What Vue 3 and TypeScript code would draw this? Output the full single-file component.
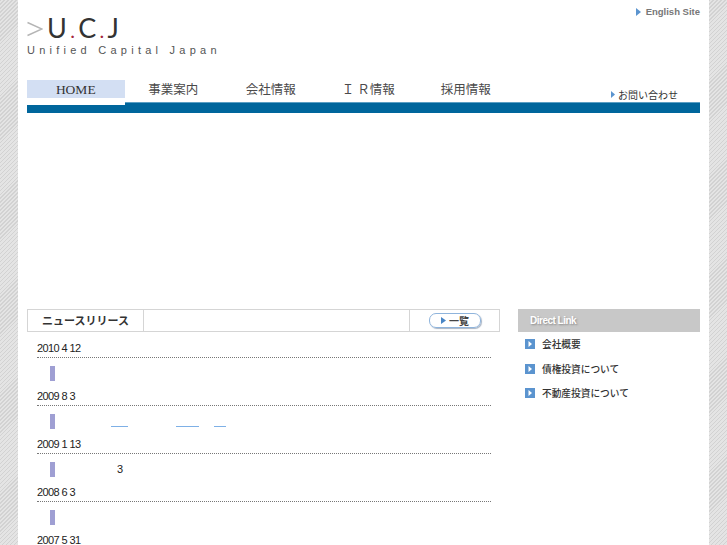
<script setup lang="ts">
const nav = ['HOME', '事業案内', '会社情報', 'Ｉ Ｒ情報', '採用情報']
const links = ['会社概要', '債権投資について', '不動産投資について']
const news: { date: string; gaps?: number[]; num?: string }[] = [
  { date: '2010 4 12' },
  { date: '2009 8 3', gaps: [17, 23, 12] },
  { date: '2009 1 13', num: '3' },
  { date: '2008 6 3' },
  { date: '2007 5 31' },
]
</script>

<template>
  <div class="page">
    <header class="head">
      <div class="logo">
        <div class="mark">
          <svg class="gt" width="16" height="16" viewBox="0 0 16 16"><path d="M0.500 1.500L15 8 0.500 14.500" fill="none" stroke="#b5b5b5" stroke-width="1.400" /></svg>
          <span>U<i>.</i>C<i>.</i><b>J</b></span>
        </div>
        <div class="sub">Unified Capital Japan</div>
      </div>
      <a class="english"><svg width="5" height="8" viewBox="0 0 5 8"><path d="M0 0l5 4-5 4z" fill="#5b94cf" /></svg>English Site</a>
    </header>
    <nav class="nav">
      <a v-for="(item, i) in nav" :key="item" class="item" :class="{ on: i === 0 }">{{ item }}</a>
      <a class="contact"><svg width="4" height="7" viewBox="0 0 4 7"><path d="M0 0l4 3.500-4 3.500z" fill="#5b94cf" /></svg>お問い合わせ</a>
    </nav>
    <div class="bar"></div>
    <main class="main">
      <section class="news">
        <div class="news-head">
          <h2>ニュースリリース</h2>
          <div class="mid"></div>
          <div class="more"><a class="btn"><svg width="5" height="7" viewBox="0 0 5 7"><path d="M0 0l5 3.500-5 3.500z" fill="#4a86c5" /></svg>一覧</a></div>
        </div>
        <article v-for="n in news" :key="n.date" class="row">
          <div class="date">{{ n.date }}</div>
          <div class="body">
            <span class="tick"></span>
            <span v-if="n.gaps" class="ul">
              <span v-for="(w, j) in n.gaps" :key="j" class="u" :class="'u' + j" :style="{ width: w + 'px' }"></span>
            </span>
            <span v-if="n.num" class="num">{{ n.num }}</span>
          </div>
        </article>
      </section>
      <aside class="side">
        <h3>Direct Link</h3>
        <ul>
          <li v-for="l in links" :key="l">
            <svg width="10" height="10" viewBox="0 0 10 10"><rect width="10" height="10" fill="#5b94cf" /><path d="M3.500 2l3.500 3-3.500 3z" fill="#fff" /></svg>
            {{ l }}
          </li>
        </ul>
      </aside>
    </main>
  </div>
</template>

<style>
html, body {
  margin: 0;
  height: 545px;
  overflow: hidden;
  background: repeating-linear-gradient(135deg, #d2d2d2 0 1px, #e4e4e4 1px 2.800px);
}
</style>

<style scoped>
.page {
  box-sizing: border-box;
  width: 691px;
  height: 545px;
  margin: 0 18px;
  padding: 0 9px;
  background: #fff;
  overflow: hidden;
  font-family: "Liberation Sans", "Noto Sans CJK JP", sans-serif;
  color: #222;
}
.head {
  height: 80px;
  display: flex;
  justify-content: space-between;
  align-items: flex-start;
}
.logo {
  padding-top: 14px;
}
.mark {
  display: flex;
  align-items: center;
  gap: 4px;
  font-family: Lato, sans-serif;
  font-weight: 400;
  font-size: 27px;
  line-height: 30px;
  height: 29px;
  color: #333;
  letter-spacing: 3.300px;
}
.mark i {
  font-style: normal;
  color: #a5263c;
  font-size: 20px;
}
.mark b {
  font-weight: 400;
  color: #333;
}
.sub {
  font-size: 11px;
  line-height: 14px;
  letter-spacing: 4.250px;
  color: #555;
}
.english {
  display: flex;
  align-items: center;
  gap: 5px;
  margin-top: 6px;
  font-size: 9.500px;
  line-height: 12px;
  font-weight: 700;
  color: #777;
}
.nav {
  display: flex;
  height: 22px;
  align-items: stretch;
}
.item {
  width: 97.500px;
  text-align: center;
  font-family: "Liberation Serif", "Noto Sans CJK JP", serif;
  font-size: 12.500px;
  line-height: 20px;
  color: #4a4a4a;
}
.item.on {
  position: relative;
  z-index: 1;
  background: #d3dff3;
  height: 18px;
  line-height: 19px;
  font-size: 13.500px;
  color: #333;
}
.item.on::after {
  content: "";
  position: absolute;
  left: 0;
  right: 0;
  top: 18px;
  height: 7px;
  background: #fff;
}
.contact {
  margin-left: auto;
  display: flex;
  align-items: center;
  gap: 3px;
  height: 28px;
  font-size: 10px;
  color: #333;
  padding-right: 22px;
}
.bar {
  height: 10px;
  background: #00669c;
  border-top: 1px solid #5b9fc4;
  position: relative;
}
.main {
  display: flex;
  justify-content: space-between;
  margin-top: 196px;
}
.news {
  width: 473px;
}
.news-head {
  box-sizing: border-box;
  height: 23px;
  border: 1px solid #d5d5d5;
  display: flex;
}
.news-head h2 {
  box-sizing: border-box;
  width: 116px;
  margin: 0;
  border-right: 1px solid #d5d5d5;
  text-align: center;
  font-size: 11px;
  line-height: 22px;
  font-weight: 700;
  color: #333;
}
.mid {
  flex: 1;
}
.more {
  box-sizing: border-box;
  width: 90px;
  border-left: 1px solid #d5d5d5;
  padding: 3px 0 0 19px;
}
.btn {
  box-sizing: border-box;
  width: 52px;
  height: 15px;
  border: 1px solid #8fb4dc;
  border-radius: 7px;
  box-shadow: 1px 1px 1px #a9b4c4;
  display: flex;
  align-items: center;
  justify-content: center;
  gap: 3px;
  font-size: 10px;
  font-weight: 700;
  color: #444;
}
.row {
  padding: 0 9px 0 10px;
}
.date {
  height: 26px;
  box-sizing: border-box;
  padding-top: 11px;
  font-size: 11px;
  line-height: 10px;
  letter-spacing: -0.600px;
  color: #222;
  border-bottom: 1px dotted #777;
}
.body {
  display: flex;
  padding: 8px 0 0 13px;
  position: relative;
  height: 14px;
}
.tick {
  width: 5px;
  height: 15px;
  background: #9f9fd3;
}
.ul {
  display: block;
}
.u {
  position: absolute;
  top: 20px;
  height: 1px;
  border-top: 1px solid #7eb0e6;
}
.u0 { left: 74px; }
.u1 { left: 139px; }
.u2 { left: 177px; }
.num {
  margin-left: 62px;
  font-size: 11px;
  line-height: 14px;
  color: #222;
}
.side {
  width: 182px;
}
.side h3 {
  margin: 0;
  height: 23px;
  background: #c8c8c8;
  color: #fff;
  font-size: 10px;
  letter-spacing: -0.500px;
  line-height: 24px;
  font-weight: 700;
  padding-left: 12px;
  box-sizing: border-box;
  text-shadow: 1px 1px 2px #888;
}
.side ul {
  list-style: none;
  margin: 0;
  padding: 0 0 0 7px;
}
.side li {
  height: 24.500px;
  display: flex;
  align-items: center;
  gap: 7px;
  font-size: 9.700px;
  font-weight: 500;
  color: #333;
}
</style>
